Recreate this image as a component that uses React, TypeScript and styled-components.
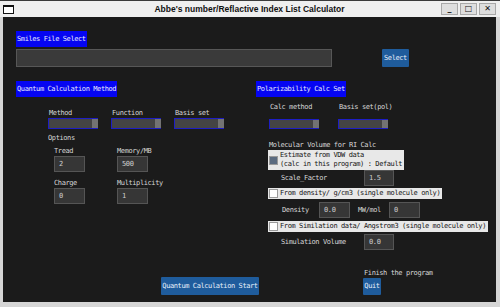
import React from 'react';
import styled, { createGlobalStyle } from 'styled-components';

const GlobalStyle = createGlobalStyle`
  html, body {
    margin: 0;
    padding: 0;
    background: #d6d6d6;
  }
  body {
    width: 500px;
    height: 307px;
    overflow: hidden;
  }
`;

const mono = `
  font-family: "DejaVu Sans Mono", "Liberation Mono", monospace;
  font-size: 7px;
  letter-spacing: -0.4px;
  line-height: 9px;
  white-space: nowrap;
`;

const Window = styled.div`
  width: 500px;
  height: 307px;
  display: flex;
  flex-direction: column;
  box-sizing: border-box;
  background: #d6d6d6;
  border-top: 1px solid #3a3a3a;
`;

const TitleBar = styled.div`
  height: 16px;
  display: grid;
  grid-template-columns: 1fr auto 1fr;
  align-items: center;
  background: #efefef;
  padding: 0 4px 0 3px;
`;

const AppIcon = styled.div`
  width: 9px;
  height: 6px;
  border: 1px solid #111;
  border-top-width: 2px;
  background: #fff;
  margin-top: 1px;
`;

const Title = styled.div`
  font-family: "Liberation Sans", Arial, sans-serif;
  font-weight: bold;
  font-size: 8.5px;
  color: #111;
  white-space: nowrap;
`;

const WinButtons = styled.div`
  display: flex;
  justify-content: flex-end;
  gap: 2px;
`;

const WinButton = styled.div`
  width: 15px;
  height: 10px;
  border: 1px solid #a8a8a8;
  background: #dedede;
  display: flex;
  align-items: center;
  justify-content: center;
  color: #111;
  font-family: "DejaVu Sans", sans-serif;
  font-size: 8px;
  font-weight: bold;
  line-height: 10px;
`;

const Body = styled.div`
  flex: 1;
  margin: 0 4px 5px 3px;
  background: #1b1b1b;
  display: flex;
  flex-direction: column;
  padding: 14px 0 7px 13px;
  color: #d6d6d6;
  ${mono}
`;

const Header = styled.div<{ w: number }>`
  width: ${(p) => p.w}px;
  height: 16px;
  background: #0505f2;
  color: #e8e8ff;
  display: flex;
  align-items: center;
  padding-left: 1px;
  box-sizing: border-box;
`;

const FileRow = styled.div`
  display: flex;
  align-items: center;
  margin-top: 2px;
`;

const PathInput = styled.div`
  width: 316px;
  height: 18px;
  box-sizing: border-box;
  background: #3a3a3a;
  border: 1px solid #575757;
`;

const Button = styled.div<{ w: number }>`
  width: ${(p) => p.w}px;
  height: 18px;
  background: #1f5c9c;
  color: #e6eefa;
  display: flex;
  align-items: center;
  justify-content: center;
  border-radius: 1px;
`;

const Columns = styled.div`
  display: flex;
  margin-top: 14px;
`;

const Column = styled.div<{ w?: number }>`
  display: flex;
  flex-direction: column;
  ${(p) => (p.w ? `width: ${p.w}px;` : 'flex: 1;')}
`;

const ComboRow = styled.div<{ indent: number; gap: number; top: number; inner: number }>`
  display: flex;
  gap: ${(p) => p.gap}px;
  margin: ${(p) => p.top}px 0 0 ${(p) => p.indent}px;
  & > div > span {
    margin-bottom: ${(p) => p.inner}px;
  }
`;

const ComboField = styled.div`
  display: flex;
  flex-direction: column;
  width: 50px;
  & > span {
    padding-left: 1px;
    display: block;
  }
`;

const Combo = styled.div<{ h: number }>`
  height: ${(p) => p.h}px;
  box-sizing: border-box;
  display: flex;
  background: #444;
  border: 1px solid #1e1ec4;
  border-right: none;
  border-bottom-width: 1px;
  &::after {
    content: '';
    margin-left: auto;
    width: 6px;
    background: #737373;
  }
`;

const Caption = styled.div<{ indent: number; top: number }>`
  margin: ${(p) => p.top}px 0 0 ${(p) => p.indent}px;
`;

const OptionGrid = styled.div`
  display: grid;
  grid-template-columns: 63px 63px;
  row-gap: 7px;
  margin: 4px 0 0 38px;
`;

const FieldBlock = styled.div`
  display: flex;
  flex-direction: column;
`;

const Entry = styled.div<{ w?: number }>`
  width: ${(p) => p.w ?? 31}px;
  height: 16px;
  box-sizing: border-box;
  background: #363636;
  border: 1px solid #555;
  display: flex;
  align-items: center;
  padding-left: 4px;
  color: #cfcfcf;
`;

const CheckRow = styled.div<{ top: number }>`
  align-self: flex-start;
  display: flex;
  align-items: center;
  gap: 2px;
  margin: ${(p) => p.top}px 0 0 12px;
  padding: 1px 2px 1px 1px;
  background: #e8e8e8;
  color: #141414;
`;

const Box = styled.div<{ checked?: boolean }>`
  width: 7px;
  height: 7px;
  border: 1px solid #9a9a9a;
  background: ${(p) => (p.checked ? '#5b6b80' : '#ffffff')};
  flex-shrink: 0;
`;

const FieldRow = styled.div<{ top: number }>`
  display: flex;
  align-items: center;
  margin: ${(p) => p.top}px 0 0 25px;
`;

const RowLabel = styled.span<{ w: number }>`
  width: ${(p) => p.w}px;
`;

const Footer = styled.div`
  margin-top: auto;
  display: flex;
  align-items: flex-end;
  padding-left: 145px;
`;

const QuitGroup = styled.div`
  display: flex;
  flex-direction: column;
  margin-left: 104px;
  gap: 0px;
  & > span {
    padding-left: 1px;
  }
`;

const App: React.FC = () => {
  return (
    <>
      <GlobalStyle />
      <Window>
        <TitleBar>
          <AppIcon />
          <Title>Abbe's number/Reflactive Index List Calculator</Title>
          <WinButtons>
            <WinButton>_</WinButton>
            <WinButton>□</WinButton>
            <WinButton>✕</WinButton>
          </WinButtons>
        </TitleBar>
        <Body>
          <Header w={71}>Smiles File Select</Header>
          <FileRow>
            <PathInput />
            <Button w={27} style={{ marginLeft: 50 }}>Select</Button>
          </FileRow>

          <Columns>
            <Column w={240}>
              <Header w={101}>Quantum Calculation Method</Header>
              <ComboRow indent={32} gap={13} top={12} inner={0}>
                <ComboField><span>Method</span><Combo h={11} /></ComboField>
                <ComboField><span>Function</span><Combo h={11} /></ComboField>
                <ComboField><span>Basis set</span><Combo h={11} /></ComboField>
              </ComboRow>
              <Caption indent={32} top={5}>Options</Caption>
              <OptionGrid>
                <FieldBlock><span>Tread</span><Entry>2</Entry></FieldBlock>
                <FieldBlock><span>Memory/MB</span><Entry>500</Entry></FieldBlock>
                <FieldBlock><span>Charge</span><Entry>0</Entry></FieldBlock>
                <FieldBlock><span>Multiplicity</span><Entry>1</Entry></FieldBlock>
              </OptionGrid>
            </Column>

            <Column>
              <Header w={90}>Polarizability Calc Set</Header>
              <ComboRow indent={13} gap={19} top={6} inner={7}>
                <ComboField><span>Calc method</span><Combo h={10} /></ComboField>
                <ComboField><span>Basis set(pol)</span><Combo h={10} /></ComboField>
              </ComboRow>
              <Caption indent={13} top={12}>Molecular Volume for RI Calc</Caption>
              <CheckRow top={0}>
                <Box checked />
                <span>
                  Estimate from VDW data
                  <br />
                  (calc in this program) : Default
                </span>
              </CheckRow>
              <FieldRow top={0}>
                <RowLabel w={83}>Scale_Factor</RowLabel>
                <Entry w={30}>1.5</Entry>
              </FieldRow>
              <CheckRow top={2}>
                <Box />
                <span>From density/ g/cm3 (single molecule only)</span>
              </CheckRow>
              <FieldRow top={3}>
                <RowLabel w={37} style={{ paddingLeft: 1 }}>Density</RowLabel>
                <Entry>0.0</Entry>
                <RowLabel w={31} style={{ marginLeft: 8 }}>MW/mol</RowLabel>
                <Entry>0</Entry>
              </FieldRow>
              <CheckRow top={3}>
                <Box />
                <span>From Similation data/ Angstrom3 (single molecule only)</span>
              </CheckRow>
              <FieldRow top={2}>
                <RowLabel w={83}>Simulation Volume</RowLabel>
                <Entry w={30}>0.0</Entry>
              </FieldRow>
            </Column>
          </Columns>

          <Footer>
            <Button w={98}>Quantum Calculation Start</Button>
            <QuitGroup>
              <span>Finish the program</span>
              <Button w={18} style={{ height: 17 }}>Quit</Button>
            </QuitGroup>
          </Footer>
        </Body>
      </Window>
    </>
  );
};

export default App;
